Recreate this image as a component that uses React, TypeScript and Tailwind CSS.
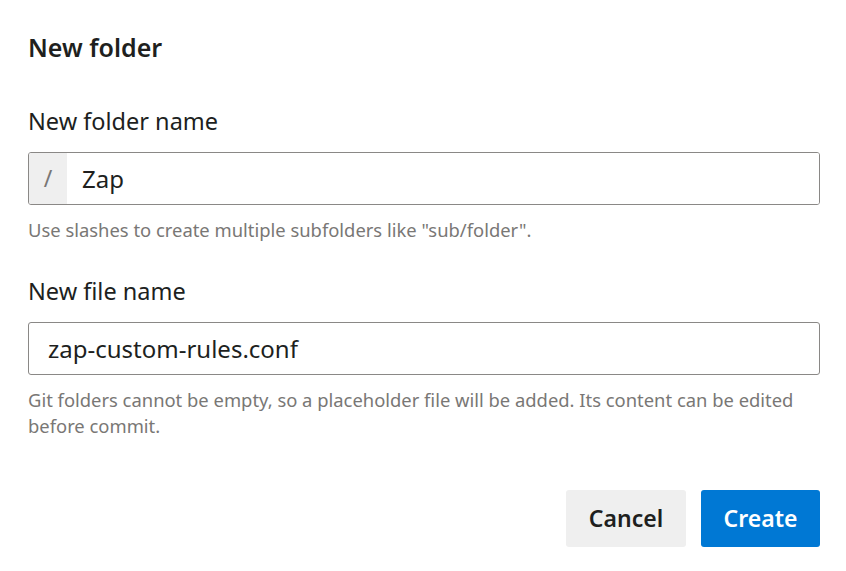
import React, { useState } from 'react';

const font = { fontFamily: '"Segoe UI", "Noto Sans", "Open Sans", sans-serif' };

export default function App() {
  const [folder, setFolder] = useState('Zap');
  const [file, setFile] = useState('zap-custom-rules.conf');

  return (
    <div className="w-[846px] h-[571px] bg-white text-[#201f1e] px-[28px] pt-[29px]" style={font}>
      {/* Header */}
      <h1 className="text-[25px] font-semibold leading-[36px]">New folder</h1>

      {/* Folder name */}
      <div className="mt-[40px]">
        <label className="block text-[23.5px] leading-[32px]">New folder name</label>
        <div className="mt-[15px] flex h-[53px] w-[792px] rounded-[3px] border border-[#8a8886] overflow-hidden">
          <div className="w-[38px] bg-[#efefef] flex items-center justify-center text-[23px] text-[#797775]">/</div>
          <input
            value={folder}
            onChange={(e) => setFolder(e.target.value)}
            className="flex-1 px-[15px] text-[24px] text-[#201f1e] outline-none bg-white"
          />
        </div>
        <p className="mt-[12px] text-[18.4px] leading-[26px] text-[#797775]">
          Use slashes to create multiple subfolders like "sub/folder".
        </p>
      </div>

      {/* File name */}
      <div className="mt-[32px]">
        <label className="block text-[23.5px] leading-[32px]">New file name</label>
        <input
          value={file}
          onChange={(e) => setFile(e.target.value)}
          className="mt-[15px] block h-[53px] w-[792px] rounded-[3px] border border-[#8a8886] px-[19px] text-[24px] text-[#201f1e] outline-none"
        />
        <p className="mt-[12px] text-[18.4px] leading-[26px] text-[#797775] w-[792px]">
          Git folders cannot be empty, so a placeholder file will be added. Its content can be edited before commit.
        </p>
      </div>

      {/* Actions */}
      <div className="mt-[51px] flex justify-end gap-[15px] w-[792px]">
        <button className="h-[57px] w-[120px] rounded-[3px] bg-[#efefef] text-[23px] font-semibold text-[#201f1e]">
          Cancel
        </button>
        <button className="h-[57px] w-[119px] rounded-[3px] bg-[#0078d4] text-[23px] font-semibold text-white">
          Create
        </button>
      </div>
    </div>
  );
}
